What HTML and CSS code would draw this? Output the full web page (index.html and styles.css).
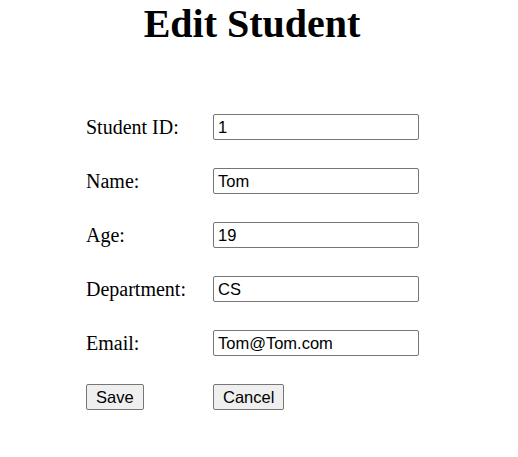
FILE: index.html
```html
<!DOCTYPE html>
<html>
<head>
<meta charset="utf-8">
<title>Edit Student</title>
<link rel="stylesheet" href="styles.css">
</head>
<body>
<h1 class="title">Edit Student</h1>
<form class="form">
  <label class="label" for="sid">Student ID:</label>
  <div class="cell"><input class="field" id="sid" type="text" value="1"></div>
  <label class="label" for="name">Name:</label>
  <div class="cell"><input class="field" id="name" type="text" value="Tom"></div>
  <label class="label" for="age">Age:</label>
  <div class="cell"><input class="field" id="age" type="text" value="19"></div>
  <label class="label" for="dept">Department:</label>
  <div class="cell"><input class="field" id="dept" type="text" value="CS"></div>
  <label class="label" for="email">Email:</label>
  <div class="cell"><input class="field" id="email" type="text" value="Tom@Tom.com"></div>
  <div class="cell"><button class="btn" type="button">Save</button></div>
  <div class="cell"><button class="btn" type="button">Cancel</button></div>
</form>
</body>
</html>
```
FILE: styles.css
```css
html, body {
  margin: 0;
  padding: 0;
  background: #ffffff;
}
body {
  font-family: "Liberation Serif", "Times New Roman", serif;
  font-size: 20px;
  color: #000000;
}
.title {
  margin: 0;
  padding: 1px 14px 0 0;
  font-size: 40px;
  font-weight: bold;
  line-height: 46px;
  text-align: center;
}
.form {
  display: grid;
  grid-template-columns: 127px 206px;
  grid-auto-rows: 54px;
  align-items: center;
  margin: 53px 0 0 86px;
}
.label {
  line-height: 23px;
}
.cell {
  display: flex;
  align-items: center;
}
.field {
  box-sizing: border-box;
  width: 206px;
  height: 26px;
  margin: 0;
  padding: 0 4px;
  border: 1px solid #767676;
  border-radius: 2px;
  font-family: "Liberation Sans", Arial, sans-serif;
  font-size: 16.5px;
  color: #000000;
  background: #ffffff;
}
.btn {
  box-sizing: border-box;
  height: 26px;
  margin: 0;
  padding: 0 9px;
  border: 1px solid #767676;
  border-radius: 2px;
  background: #efefef;
  font-family: "Liberation Sans", Arial, sans-serif;
  font-size: 16.5px;
  color: #000000;
}
```
